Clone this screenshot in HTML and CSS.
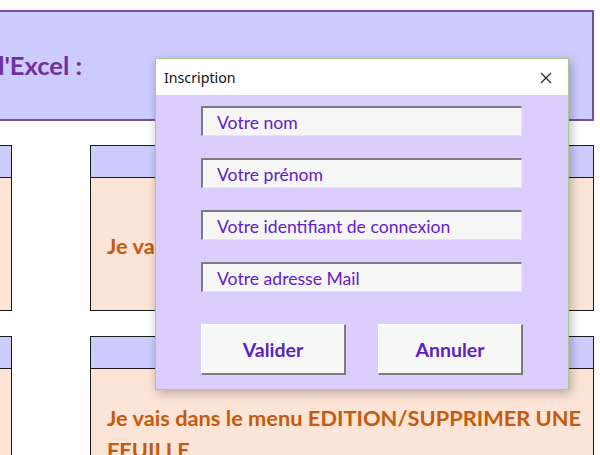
FILE: index.html
```html
<!DOCTYPE html>
<html lang="fr">
<head>
<meta charset="utf-8">
<title>Inscription</title>
<link rel="stylesheet" href="styles.css">
</head>
<body>
<div class="sheet">
  <div class="banner"><span class="banner-text">d'Excel :</span></div>
  <div class="grid">
    <div class="box"><div class="box-head"></div><div class="box-body"></div></div>
    <div class="box"><div class="box-head"></div><div class="box-body mid"><p class="note">Je vais dans le menu INSERTION/FEUILLE</p></div></div>
    <div class="box"><div class="box-head"></div><div class="box-body"></div></div>
    <div class="box"><div class="box-head"></div><div class="box-body top"><p class="note">Je vais dans le menu EDITION/SUPPRIMER UNE FEUILLE</p></div></div>
  </div>
</div>

<div class="dialog">
  <div class="titlebar">
    <span class="title">Inscription</span>
    <svg class="close" width="12" height="12" viewBox="0 0 12 12"><path d="M1 1 L11 11 M11 1 L1 11" stroke="#222" stroke-width="1.1" fill="none"/></svg>
  </div>
  <div class="dlg-body">
    <div class="field">Votre nom</div>
    <div class="field">Votre prénom</div>
    <div class="field">Votre identifiant de connexion</div>
    <div class="field">Votre adresse Mail</div>
    <div class="buttons">
      <button class="btn">Valider</button>
      <button class="btn">Annuler</button>
    </div>
  </div>
</div>
</body>
</html>
```
FILE: styles.css
```css
html, body {
  margin: 0;
  padding: 0;
  width: 600px;
  height: 455px;
  overflow: hidden;
  background: #ffffff;
  font-family: "Lato", "Open Sans", sans-serif;
}

.sheet {
  padding-top: 10px;
  position: relative;
}

.banner {
  margin-left: -20px;
  width: 614px;
  height: 111px;
  box-sizing: border-box;
  background: #ccccff;
  border: 2px solid #7a4ea6;
  display: flex;
  align-items: center;
  overflow: hidden;
}

.banner-text {
  margin-left: 8px;
  margin-top: -2px;
  font-weight: 700;
  font-size: 25.5px;
  color: #7030a0;
  white-space: nowrap;
}

.grid {
  margin-top: 24px;
  margin-left: -50px;
  display: grid;
  grid-template-columns: 62px 504px;
  grid-template-rows: 166px 140px;
  column-gap: 78px;
  row-gap: 25px;
}

.box {
  border: 1.5px solid #1a1a1a;
  display: flex;
  flex-direction: column;
  box-sizing: border-box;
  overflow: hidden;
}

.box-head {
  height: 31px;
  background: #ccccff;
  border-bottom: 1.5px solid #1a1a1a;
  flex: none;
}

.box-body {
  flex: 1;
  background: #fce4d6;
  display: flex;
  padding: 0 0 0 16px;
}

.box-body.mid { align-items: center; }
.box-body.top { align-items: flex-start; padding-top: 33px; }

.note {
  margin: 0;
  font-weight: 700;
  font-size: 21.8px;
  line-height: 32px;
  color: #c55a11;
}

.box-body.mid .note { margin-top: 4px; }

.dialog {
  position: absolute;
  left: 155px;
  top: 58px;
  width: 414px;
  height: 332px;
  box-sizing: border-box;
  border: 1px solid #a9c98c;
  box-shadow: 2px 3px 10px rgba(0, 0, 0, 0.28);
  display: flex;
  flex-direction: column;
}

.titlebar {
  height: 36px;
  background: #ffffff;
  display: flex;
  align-items: center;
  justify-content: space-between;
  padding: 0 16px 0 8px;
  flex: none;
}

.title {
  font-family: "Noto Sans", "Open Sans", sans-serif;
  font-size: 14.2px;
  color: #111;
  margin-top: 1px;
}

.close { margin-top: 1px; }

.dlg-body {
  flex: 1;
  background: #dccdff;
  padding: 11px 0 0 45px;
  display: flex;
  flex-direction: column;
}

.field {
  width: 321px;
  height: 30px;
  box-sizing: border-box;
  background: #f6f6f6;
  border-top: 2px solid #7c7c7c;
  border-left: 2px solid #7c7c7c;
  border-right: 1.5px solid #e6e6e6;
  border-bottom: 1.5px solid #e6e6e6;
  padding-left: 14px;
  padding-top: 1px;
  display: flex;
  align-items: center;
  font-size: 17.6px;
  color: #6420c8;
  margin-bottom: 22px;
}

.field:nth-child(4) { margin-bottom: 32px; }

.buttons {
  display: flex;
  gap: 32px;
}

.btn {
  width: 145px;
  height: 51px;
  box-sizing: border-box;
  background: #f7f7f7;
  border-top: 1.5px solid #ffffff;
  border-left: 1.5px solid #ffffff;
  border-right: 2px solid #7c7c7c;
  border-bottom: 2px solid #7c7c7c;
  font-family: "Lato", "Open Sans", sans-serif;
  font-weight: 700;
  font-size: 19.5px;
  color: #5b1fc4;
  padding: 0;
}
```
